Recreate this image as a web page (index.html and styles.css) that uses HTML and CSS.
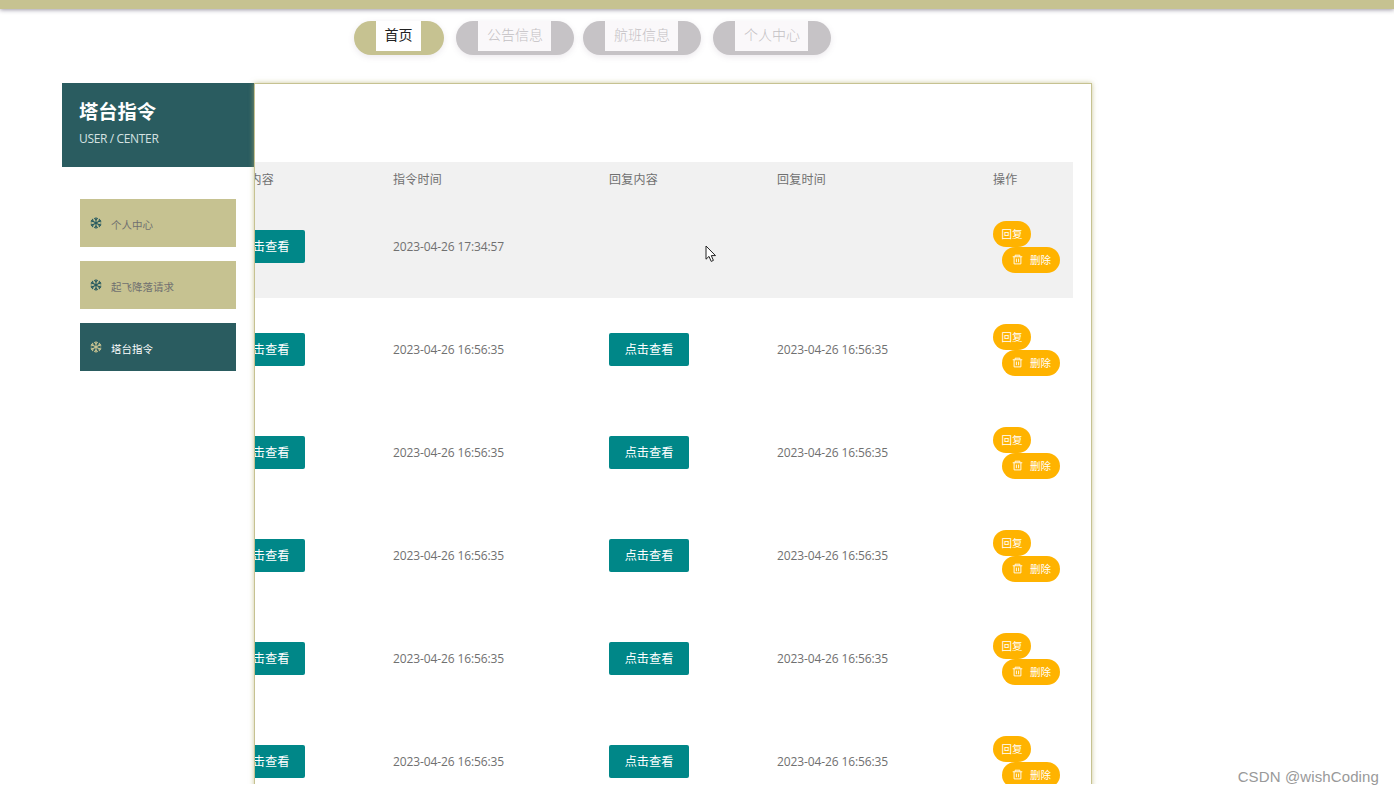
FILE: index.html
```
<!DOCTYPE html>
<html lang="zh-CN">
<head>
  <meta charset="UTF-8">
  <meta name="viewport" content="width=device-width, initial-scale=1.0">
  <title>塔台指令</title>
  <link rel="stylesheet" href="styles.css">
</head>
<body>

  <!-- Shared icons -->
  <svg class="icon-defs" width="0" height="0">
    <symbol id="snow" viewBox="0 0 14 14">
      <g fill="none" stroke="currentColor" stroke-width="1.3">
        <path d="M7 .4v13.2M1.3 3.7l11.4 6.6M1.3 10.3l11.4-6.6"/>
        <path d="M5 1.2l2 2 2-2M5 12.8l2-2 2 2M.8 5.8l2.8-.7L2.9 2.3M13.2 8.2l-2.8.7.7 2.8M.8 8.2l2.8.7-.7 2.8M13.2 5.8l-2.8-.7.7-2.8"/>
      </g>
    </symbol>
    <symbol id="trash" viewBox="0 0 12 12">
      <path d="M.8 3h10.4M3.4 2.8V1.3h5.2v1.5M2.3 3.2v7.6h7.4V3.2M4.8 5v4M7.2 5v4" fill="none" stroke="currentColor" stroke-width="1"/>
    </symbol>
  </svg>

  <div class="page">
    <div class="top-bar"></div>

    <!-- Navigation -->
    <nav class="nav">
      <a class="nav-item active" href="#"><span>首页</span></a>
      <a class="nav-item" href="#"><span>公告信息</span></a>
      <a class="nav-item" href="#"><span>航班信息</span></a>
      <a class="nav-item" href="#"><span>个人中心</span></a>
    </nav>

    <div class="main">
      <!-- Sidebar -->
      <aside class="sidebar">
        <div class="sidebar-title">
          <h2>塔台指令</h2>
          <p>USER / CENTER</p>
        </div>
        <ul class="menu">
          <li><svg><use href="#snow"/></svg>个人中心</li>
          <li><svg><use href="#snow"/></svg>起飞降落请求</li>
          <li class="active"><svg><use href="#snow"/></svg>塔台指令</li>
        </ul>
      </aside>

      <!-- Command list -->
      <section class="panel">
        <table class="list">
          <thead>
            <tr>
              <th class="col-btn">指令内容</th>
              <th class="col-time">指令时间</th>
              <th class="col-btn">回复内容</th>
              <th class="col-time">回复时间</th>
              <th class="col-op">操作</th>
            </tr>
          </thead>
          <tbody>
            <tr class="hover">
              <td><button class="view">点击查看</button></td>
              <td>2023-04-26 17:34:57</td>
              <td></td>
              <td></td>
              <td><div class="ops"><button class="op">回复</button><button class="op del"><svg><use href="#trash"/></svg>删除</button></div></td>
            </tr>
            <tr>
              <td><button class="view">点击查看</button></td>
              <td>2023-04-26 16:56:35</td>
              <td><button class="view">点击查看</button></td>
              <td>2023-04-26 16:56:35</td>
              <td><div class="ops"><button class="op">回复</button><button class="op del"><svg><use href="#trash"/></svg>删除</button></div></td>
            </tr>
            <tr>
              <td><button class="view">点击查看</button></td>
              <td>2023-04-26 16:56:35</td>
              <td><button class="view">点击查看</button></td>
              <td>2023-04-26 16:56:35</td>
              <td><div class="ops"><button class="op">回复</button><button class="op del"><svg><use href="#trash"/></svg>删除</button></div></td>
            </tr>
            <tr>
              <td><button class="view">点击查看</button></td>
              <td>2023-04-26 16:56:35</td>
              <td><button class="view">点击查看</button></td>
              <td>2023-04-26 16:56:35</td>
              <td><div class="ops"><button class="op">回复</button><button class="op del"><svg><use href="#trash"/></svg>删除</button></div></td>
            </tr>
            <tr>
              <td><button class="view">点击查看</button></td>
              <td>2023-04-26 16:56:35</td>
              <td><button class="view">点击查看</button></td>
              <td>2023-04-26 16:56:35</td>
              <td><div class="ops"><button class="op">回复</button><button class="op del"><svg><use href="#trash"/></svg>删除</button></div></td>
            </tr>
            <tr>
              <td><button class="view">点击查看</button></td>
              <td>2023-04-26 16:56:35</td>
              <td><button class="view">点击查看</button></td>
              <td>2023-04-26 16:56:35</td>
              <td><div class="ops"><button class="op">回复</button><button class="op del"><svg><use href="#trash"/></svg>删除</button></div></td>
            </tr>
          </tbody>
        </table>
      </section>
    </div>

    <svg class="cursor" viewBox="0 0 12 18">
      <path d="M1 1v13.2l3-2.8 2.2 5 2.2-1-2.1-4.8h4.2z" fill="#fff" stroke="#222" stroke-width="1"/>
    </svg>
  </div>

  <div class="watermark">CSDN @wishCoding</div>

</body>
</html>
```

FILE: styles.css
```
/* Global styles */
* {
  box-sizing: border-box;
}

body {
  margin: 0;
  height: 795px;
  overflow: hidden;
  background: #fff;
  color: #707070;
  font-family: "Open Sans", "Noto Sans CJK SC", sans-serif;
  font-size: 12px;
}

button {
  border: none;
  padding: 0;
  font-family: inherit;
  color: #fff;
  cursor: pointer;
}

.icon-defs {
  position: absolute;
}

.page {
  height: 784px;
  overflow: hidden;
}

.top-bar {
  height: 9px;
  background: #c6c291;
  box-shadow: 0 1px 4px rgba(60, 50, 80, 0.5);
}

/* Navigation */
.nav {
  display: flex;
  height: 34px;
  margin: 12px 0 28px 354px;
}

.nav-item {
  height: 34px;
  margin-right: 11px;
  padding: 0 23px 4px 22px;
  border-radius: 17px;
  background: #c6c3c6;
  box-shadow: 0 2px 6px rgba(120, 100, 130, 0.14);
  text-decoration: none;
}

.nav-item:first-child {
  margin-right: 12px;
}

.nav-item:nth-child(2) {
  margin-right: 9px;
}

.nav-item:nth-child(3) {
  margin-right: 12px;
}

.nav-item span {
  display: block;
  height: 30px;
  padding: 0 8.5px;
  background: #faf8fa;
  color: #c3c0c3;
  font-size: 14px;
  font-weight: 300;
  line-height: 28px;
}

.nav-item:not(.active) span {
  padding: 0 8px 0 9px;
}

.nav-item.active {
  background: #c6c291;
}

.nav-item.active span {
  background: #fff;
  color: #222;
  font-weight: 400;
}

.main {
  display: flex;
  align-items: flex-start;
  padding-left: 62px;
}

/* Sidebar */
.sidebar {
  width: 192px;
}

.sidebar-title {
  height: 84px;
  padding: 14px 17px;
  background: #2a5c60;
  color: #fff;
}

.sidebar-title h2 {
  margin: 0;
  font-size: 19.3px;
  line-height: 29px;
}

.sidebar-title p {
  margin: 3px 0 0;
  color: #d5e2e2;
  font-size: 12px;
  line-height: 20px;
  letter-spacing: -0.35px;
}

.menu {
  margin: 32px 18px 0;
  padding: 0;
  list-style: none;
}

.menu li {
  display: flex;
  align-items: center;
  height: 48px;
  margin-bottom: 14px;
  padding: 2px 0 0 10px;
  background: #c6c291;
  font-size: 10.5px;
}

.menu svg {
  width: 12px;
  height: 12px;
  margin: -3px 9px 0 0;
  color: #2a5c60;
}

.menu .active {
  background: #2a5c60;
  color: #fff;
}

.menu .active svg {
  color: #c6c291;
}

/* Command list, the table is scrolled to its right end */
.panel {
  width: 838px;
  height: 760px;
  padding-top: 78px;
  border: 1px solid #c6c291;
  box-shadow: 0 0 5px rgba(180, 175, 110, 0.7);
  overflow: hidden;
}

.list {
  width: 863px;
  margin-left: -45px;
  table-layout: fixed;
  border-collapse: collapse;
}

.list th,
.list td {
  padding: 0 0 0 15px;
  text-align: left;
  font-weight: 400;
  letter-spacing: 0.25px;
}

.list thead tr {
  height: 33px;
  background: #f1f1f1;
}

.list tbody tr {
  height: 103px;
}

.list tbody td {
  letter-spacing: -0.12px;
}

.list .hover {
  background: #f1f1f1;
}

.col-btn {
  width: 168px;
}

.col-time {
  width: 216px;
}

.col-op {
  width: 95px;
}

.view {
  display: block;
  width: 80px;
  height: 33px;
  padding-bottom: 2px;
  border-radius: 2px;
  background: #008788;
  font-size: 12.2px;
}

.ops {
  display: flex;
  flex-direction: column;
  align-items: flex-start;
}

.op {
  display: flex;
  align-items: center;
  height: 26px;
  padding: 0 8px 0 8.5px;
  border-radius: 13px;
  background: #ffb300;
  font-size: 10.5px;
}

.op.del {
  margin-left: 9px;
  padding: 0 9px 0 10px;
}

.op svg {
  width: 11px;
  height: 11px;
  margin-right: 7px;
}

/* Mouse pointer */
.cursor {
  position: absolute;
  left: 705px;
  top: 245px;
  width: 12px;
  height: 18px;
}

.watermark {
  position: absolute;
  right: 15px;
  bottom: 8px;
  color: #999;
  font-family: "Liberation Sans", sans-serif;
  font-size: 15px;
  line-height: 20px;
  letter-spacing: 0.12px;
}
```
